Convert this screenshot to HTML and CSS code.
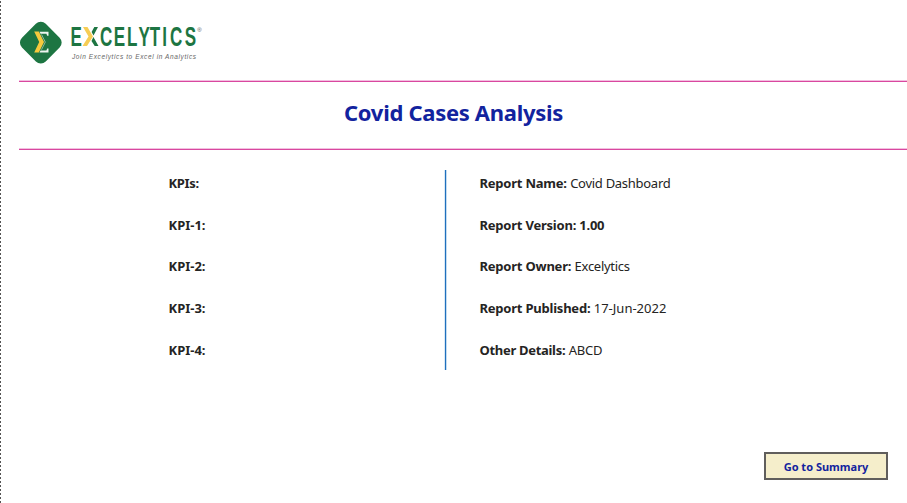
FILE: index.html
```html
<!DOCTYPE html>
<html lang="en">
<head>
<meta charset="utf-8">
<title>Covid Cases Analysis</title>
<link rel="stylesheet" href="styles.css">
</head>
<body>
<div class="page">
  <header class="brand">
    <svg class="logo" width="195" height="50" viewBox="15 15 195 50" role="img" aria-label="Excelytics">
      <rect x="24" y="25.800" width="33.600" height="33.600" rx="7" transform="rotate(45 40.8 42.6)" fill="#1d7542"/>
      <path d="M39.500 31.800h9v4h-1.300l-.8-2h-5.900zM39.500 52.400h9v-4h-1.300l-.8 2h-5.900z" fill="#eef5ef"/>
      <path d="M41.500 34.500l3.800 7.600-3.800 7.600" fill="none" stroke="#a9c9b3" stroke-width=".8"/>
      <path d="M34.200 31.600h4.600l5.200 10.500-5.200 10.500h-4.600l5-10.500z" fill="#f6c93d"/>
      <g class="wordmark" transform="scale(.62 1)">
        <text x="113.700" y="46">E</text>
        <text x="161.300 183.500 205 223.300 241.500 261.800 274.200 298" y="46">CELYTICS</text>
      </g>
      <path d="M83 27h4.500l5.500 9.500-6 9.500h-4.500l6-9.500z" fill="#f6cd55"/>
      <path d="M98 27h-3.700l-2.700 5 1.900 3.500zM98.500 46h-3.800l-3.200-5 1.900-4z" fill="#1d7542"/>
      <text class="mark" x="197.300" y="32">®</text>
      <text class="tagline" x="72" y="59.200" textLength="124" lengthAdjust="spacing">Join Excelytics to Excel in Analytics</text>
    </svg>
  </header>
  <div class="title-band"><h1>Covid Cases Analysis</h1></div>
  <main class="details">
    <ul class="kpis">
      <li class="heading">KPIs:</li><li>KPI-1:</li><li>KPI-2:</li><li>KPI-3:</li><li>KPI-4:</li>
    </ul>
    <ul class="report">
      <li><b>Report Name:</b> <span class="tight">Covid Dashboard</span></li>
      <li><b>Report Version: 1.00</b></li>
      <li><b>Report Owner:</b> <span class="tight">Excelytics</span></li>
      <li><b>Report Published:</b> <span>17-Jun-2022</span></li>
      <li class="last"><b>Other Details:</b> <span>ABCD</span></li>
    </ul>
  </main>
  <footer><button class="go" type="button">Go to Summary</button></footer>
</div>
</body>
</html>
```
FILE: styles.css
```css
* { box-sizing: border-box; }
body { margin: 0; background: #fff; color: #252423; font-family: "Segoe UI", "Noto Sans", sans-serif; }
.page {
  height: 503px;
  padding-left: 19px;
  display: flex;
  flex-direction: column;
  overflow: hidden;
  background: repeating-linear-gradient(to bottom, #fff 0 1px, #555 1px 3px, #fff 3px 4px) left top / 1px 100% no-repeat;
}
.brand { height: 80px; padding: 15px 0 0; }
.logo { display: block; margin-left: -4px; }
.wordmark { font: bold 27.500px "Liberation Sans", sans-serif; fill: #1d7542; }
.mark { font: 6px "Liberation Sans", sans-serif; fill: #555; }
.tagline { font: italic 6.500px "Liberation Sans", sans-serif; fill: #666; }
.title-band {
  height: 70px;
  border-top: 1px solid #f2bfe0;
  border-bottom: 1px solid #d9489f;
  box-shadow: inset 0 1px #d9489f, inset 0 -1px #f2bfe0;
  padding-right: 19px;
  display: flex;
  justify-content: center;
}
h1 { margin: 0; font-size: 22px; line-height: 62px; letter-spacing: -0.300px; color: #12239e; font-weight: 700; }
.details { margin-top: 20px; height: 200px; display: flex; font-size: 13px; }
.details ul { list-style: none; margin: 0; padding: 0; line-height: 26px; }
.details li { height: 41.700px; white-space: nowrap; }
.details .kpis {
  width: 427px;
  padding-left: 149.500px;
  border-right: 1px solid #1f6fbd;
  box-shadow: 1px 0 #c4dcf0, inset -1px 0 #d9e9f6;
  font-weight: 700;
}
.heading { letter-spacing: -0.300px; }
.details .report { padding-left: 33.500px; }
.report b { letter-spacing: -0.220px; }
.tight { letter-spacing: -0.280px; }
.report .last b { letter-spacing: -0.300px; }
.last span { letter-spacing: -0.200px; }
footer { margin-top: 82px; padding-right: 19px; display: flex; justify-content: flex-end; }
.go {
  width: 124px; height: 28px; padding: 0;
  border: 2px solid #605e5c; background: #f5eecb; color: #12239e;
  font: bold 11px "Segoe UI", "Noto Sans", sans-serif;
}
```
